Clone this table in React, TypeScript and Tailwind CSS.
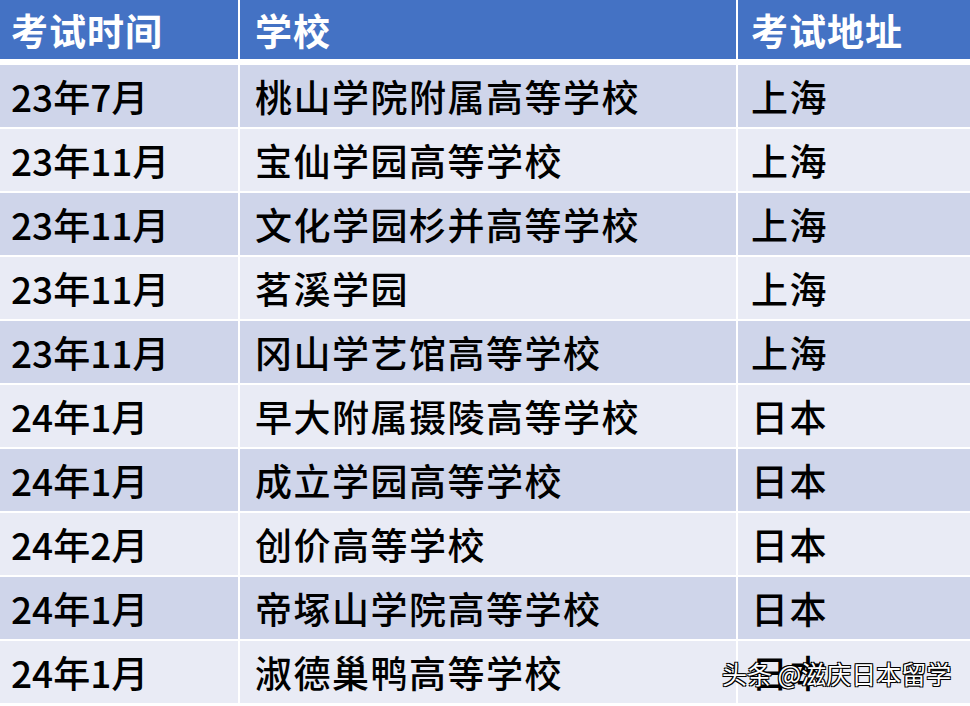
import React from "react";

const rows: [string, string, string][] = [
  ["23年7月", "桃山学院附属高等学校", "上海"],
  ["23年11月", "宝仙学园高等学校", "上海"],
  ["23年11月", "文化学园杉并高等学校", "上海"],
  ["23年11月", "茗溪学园", "上海"],
  ["23年11月", "冈山学艺馆高等学校", "上海"],
  ["24年1月", "早大附属摄陵高等学校", "日本"],
  ["24年1月", "成立学园高等学校", "日本"],
  ["24年2月", "创价高等学校", "日本"],
  ["24年1月", "帝塚山学院高等学校", "日本"],
  ["24年1月", "淑德巢鸭高等学校", "日本"],
];

export default function App() {
  return (
    <div
      className="relative w-[970px] h-[706px] overflow-hidden bg-white text-black"
      style={{ fontFamily: '"Noto Sans CJK SC", "Noto Sans", sans-serif' }}
    >
      <div className="flex flex-col gap-[2px]">
        <div className="grid grid-cols-[238px_496px_1fr] gap-x-[2px] h-[59px] mb-[4px]">
          <div className="bg-[#4472c4] text-white font-bold text-[37px] tracking-[1px] leading-none flex items-center pl-[11px] pt-[2px]">考试时间</div>
          <div className="bg-[#4472c4] text-white font-bold text-[37px] tracking-[1px] leading-none flex items-center pl-[15px] pt-[2px]">学校</div>
          <div className="bg-[#4472c4] text-white font-bold text-[37px] tracking-[1px] leading-none flex items-center pl-[13px] pt-[2px]">考试地址</div>
        </div>
        {rows.map((r, i) => {
          const bg = i % 2 === 0 ? "bg-[#cfd5ea]" : "bg-[#e9ebf5]";
          return (
            <div key={i} className="grid grid-cols-[238px_496px_1fr] gap-x-[2px] h-[62px]">
              <div className={`${bg} text-[37px] font-medium leading-none flex items-center pl-[11px]`}>{r[0]}</div>
              <div className={`${bg} text-[37px] font-medium leading-none flex items-center pl-[15px] tracking-[1.5px]`}>{r[1]}</div>
              <div className={`${bg} text-[37px] font-medium leading-none flex items-center pl-[13px] tracking-[1.5px]`}>{r[2]}</div>
            </div>
          );
        })}
      </div>
      <div className="absolute left-[722px] top-[661px] text-[25px] leading-none text-white whitespace-nowrap [text-shadow:0_0_1px_#000,1px_1px_0_#000,-1px_-1px_0_#000,1px_-1px_0_#000,-1px_1px_0_#000]">
        头条 @滋庆日本留学
      </div>
    </div>
  );
}
